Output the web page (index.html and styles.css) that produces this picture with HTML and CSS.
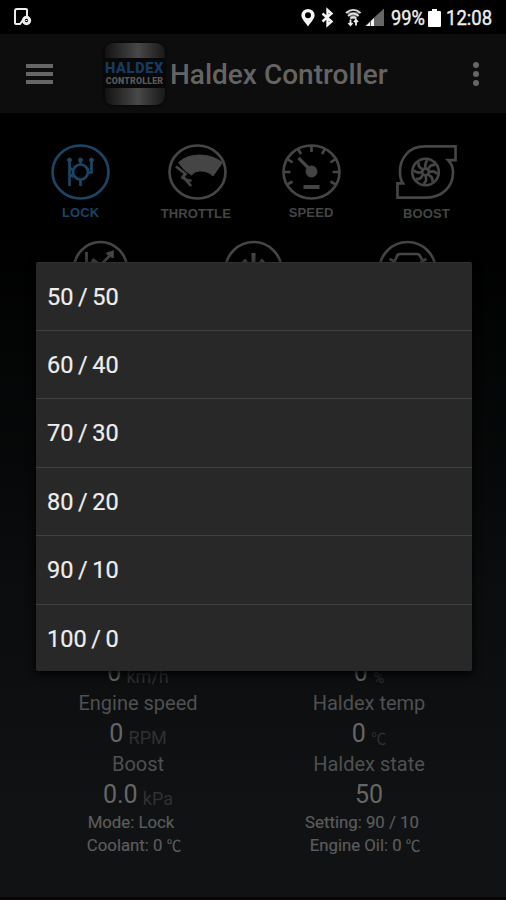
FILE: index.html
```html
<!DOCTYPE html>
<html lang="en">
<head>
<meta charset="utf-8">
<title>Haldex Controller</title>
<link rel="stylesheet" href="styles.css">
</head>
<body>
<div class="status">
  <svg class="note" width="20" height="22" viewBox="0 0 20 22" fill="none" stroke="#eee" stroke-width="2"><path d="M14 9V3Q14 2 13 2H4Q2 2 2 4V16Q2 17 3 17H7L10 13"/><circle cx="13.500" cy="13.500" r="3.200" stroke-width="3"/><path d="M12.500 13.500h2" stroke-width="1"/></svg>
  <svg class="tray" width="88" height="22" viewBox="0 0 88 22">
    <path fill="#f4f4f4" fill-rule="evenodd" d="M7 2a6.600 6.300 0 0 1 6.600 6.300C13.600 12 9.500 15.500 7 19.500C4.500 15.500.4 12 .4 8.300A6.600 6.300 0 0 1 7 2zM7 5.200a3 3 0 1 0 0 6a3 3 0 1 0 0-6z"/>
    <path fill="none" stroke="#f4f4f4" stroke-width="2.400" d="M21.500 6.500L30.500 14.500L26.500 18V3L30.500 6.500L21.500 14.500"/>
    <g transform="translate(1 0)">
    <path fill="none" stroke="#ddd" stroke-width="1.800" d="M44 6Q51.300-.2 58.600 6M46 9Q51.300 4 56.600 9M48.200 11.500Q51.300 9 54.400 11.500"/>
    <path fill="#eee" d="M44.500 5.200h13.500l-5.500 7h-2.500z" opacity=".45"/>
    <path stroke="#eee" stroke-width="1.800" fill="none" d="M48.500 12.500v5.500M46.500 16l2 2.200l2-2.200M54 18.500V13M52 15l2-2.200l2 2.200"/>
    </g>
    <path fill="#666" d="M83 1.500V19H64z"/><path fill="#f4f4f4" d="M65 19L69 15.300V19zM70 14L73 11V19h-3z"/>
  </svg>
  <span class="pct">99%</span>
  <svg class="batt" width="13" height="20" viewBox="0 0 13 20"><path fill="#fff" d="M4 1h5v2h3q1 0 1 1v14q0 1-1 1H1q-1 0-1-1V4q0-1 1-1h3z"/></svg>
  <span class="clock">12:08</span>
</div>
<header class="bar">
  <div class="menu"><i></i><i></i><i></i></div>
  <div class="logo"><span class="cap"></span><span class="name">HALDEX</span><span class="sub">CONTROLLER</span><span class="cap low"></span></div>
  <h1>Haldex Controller</h1>
  <div class="more"><i></i><i></i><i></i></div>
</header>
<main>
  <div class="modes">
    <div class="mode on"><svg viewBox="0 0 60 58"><ellipse cx="30" cy="29" rx="28" ry="26.500"/><circle cx="30" cy="29" r="7.500"/><path d="M19 17V43M30 17v5M30 37v6M41 17v12.500h-4M19 25l4 2M19 31l4 3"/><g class="dots"><circle cx="19" cy="17" r="2"/><circle cx="30" cy="17" r="2"/><circle cx="41" cy="17" r="2"/></g></svg><b class="lock">LOCK</b></div>
    <div class="mode throttle"><svg viewBox="0 0 60 58"><ellipse cx="30" cy="29" rx="28" ry="26.500"/><path class="dots" d="M11 19.500Q19 12 32 12Q45 12 55 19.500L45.500 33Q40 27.500 32 28Q27 28 24 32L17 27z"/><path d="M8.500 23.500L18 31L15.500 33.500L23.500 43M14 34l6 3.500h4"/></svg><b>THROTTLE</b></div>
    <div class="mode speed"><svg viewBox="0 0 60 58"><ellipse cx="30" cy="29" rx="28" ry="26.500"/><path d="M30 3v6M16.500 6l3 5M43.500 6l-3 5M6 16l5 3.500M54 16l-5 3.500M2 29h7M58 29h-7M5 42l6-3.500M55 42l-6-3.500"/><path stroke-width="3" d="M17 15L30 28"/><circle class="dots" cx="30" cy="28.500" r="5.500"/><path d="M22 44h16" stroke-width="4"/></svg><b>SPEED</b></div>
    <div class="mode"><svg viewBox="0 0 62 58"><path d="M60.500 3H29C13 3 4 15 4 29Q4 36 7 40.500H1.500V55H31C47 55 58 44 58 29Q58 22 53 17H60.500z"/><circle cx="30" cy="29" r="13.500"/><circle cx="30" cy="29" r="3.500"/><path d="M30 25Q29 20 32 17M33 26Q35 21 40 22M34 29Q39 27 42 31M33 32Q38 34 37 39M30 33Q32 38 28 41M27 32Q25 37 20 36M26 29Q21 31 18 27M27 26Q22 24 23 19"/></svg><b>BOOST</b></div>
  </div>
  <div class="modes second">
    <div class="mode"><svg viewBox="0 0 60 58"><ellipse cx="30" cy="29" rx="26.500" ry="27"/><path d="M16 12V43H45M18 28L23 20L30 25L41 14M36 14l6-2v6"/></svg></div>
    <div class="mode"><svg viewBox="0 0 60 58"><circle cx="30" cy="30" r="28"/><path d="M30 13v17M23 20A12 12 0 1 0 37 20" stroke-width="4"/></svg></div>
    <div class="mode"><svg viewBox="0 0 60 58"><circle cx="30" cy="30" r="28"/><path d="M16 24L20 15Q21 14 23 14H39Q41 14 42 15L47 24V39H14V24zM12 19l6 3M49 19l-6 3"/></svg></div>
  </div>
  <div class="stats">
    <section><p class="value">0 <small>km/h</small></p><p class="label">Engine speed</p><p class="value">0 <small>RPM</small></p><p class="label">Boost</p><p class="value">0.0 <small>kPa</small></p><p class="info">Mode: Lock</p><p class="info wide">Coolant: 0 <span>℃</span></p></section>
    <section><p class="value">0 <small class="deg">%</small></p><p class="label">Haldex temp</p><p class="value">0 <small class="deg">℃</small></p><p class="label">Haldex state</p><p class="value">50</p><p class="info">Setting: 90 / 10</p><p class="info wide">Engine Oil: 0 <span>℃</span></p></section>
  </div>
</main>
<ul class="dialog"><li>50 / 50</li><li>60 / 40</li><li>70 / 30</li><li>80 / 20</li><li>90 / 10</li><li>100 / 0</li></ul>
</body>
</html>
```
FILE: styles.css
```css
* { box-sizing: border-box; margin: 0; padding: 0; }
body { width: 506px; height: 900px; overflow: hidden; display: flex; flex-direction: column; position: relative; background: #000; font-family: Roboto, "Noto Sans CJK JP", sans-serif; }
.status { flex: none; height: 34px; display: flex; align-items: center; color: #eee; padding: 2px 13px 0 13px; font-size: 21px; }
.tray { margin-left: auto; margin-right: 3px; }
.pct, .clock { transform-origin: left; white-space: nowrap; -webkit-text-stroke: .4px #eee; }
.pct { width: 37px; transform: scaleX(.87); margin-left: -1px; }
.clock { width: 47px; transform: scaleX(.88); margin-left: 5px; }
.batt { flex: none; }
.bar { flex: none; height: 79px; background: #0d0d0d; display: flex; align-items: center; padding: 0 26px; }
.menu { width: 27px; height: 20px; display: flex; flex-direction: column; justify-content: space-between; }
.menu i { height: 4px; background: #666; }
.logo { width: 61px; height: 62px; margin-left: 51px; border-radius: 9px; background: #080808; overflow: hidden; display: flex; flex-direction: column; align-items: center; box-shadow: 0 0 3px #000; }
.cap { flex: none; width: 60px; height: 15px; background: linear-gradient(90deg, #121212, #484848 55%, #181818); }
.name { height: 15px; margin-top: 2px; font: 900 14.500px/17px Roboto, sans-serif; letter-spacing: .7px; color: #173b5e; }
.sub { height: 13px; font: 900 8.800px/13px Roboto, sans-serif; letter-spacing: .2px; color: #595959; }
.low { height: 17px; }
.bar h1 { margin-left: 5px; padding-top: 1px; font-size: 28px; font-weight: 500; color: #646464; white-space: nowrap; }
.more { margin-left: auto; width: 9px; height: 24px; display: flex; flex-direction: column; justify-content: space-between; align-items: center; }
.more i { width: 6px; height: 6px; border-radius: 50%; background: #666; }
main { flex: 1; min-height: 0; display: flex; flex-direction: column; background: linear-gradient(#000 0, #000 14%, #0a0c0d 60%, #101214 90%, #111214 99.6%, #0b0306 99.6%); }
.modes { flex: none; height: 126px; padding: 30px 22px 0 23px; display: grid; grid-template-columns: repeat(4, 1fr); }
.mode { display: flex; flex-direction: column; align-items: center; color: #454545; }
.mode svg { flex: none; width: 61px; height: 58px; fill: none; stroke: currentColor; stroke-width: 2.700px; }
.mode svg path[stroke-width="3"] { stroke-width: 3.200px; }
.mode svg path[stroke-width="4"] { stroke-width: 4px; }
.mode .dots { fill: currentColor; stroke-width: 1px; }
.mode.on { color: #1a4565; }
.mode b { font: bold 13px/24px "Liberation Sans", sans-serif; white-space: nowrap; margin-top: 1px; letter-spacing: .1px; }
.mode .lock, .speed b { margin-top: 0; }
.throttle svg { margin-left: 4px; }
.speed svg { margin-left: 1px; }
.second { grid-template-columns: repeat(3, 1fr); padding: 1px 22px 0 24px; height: 420px; }
.stats { flex: none; display: flex; padding: 0 22px; }
.stats section { width: 231px; display: flex; flex-direction: column; align-items: center; color: #505050; }
.stats section p { white-space: nowrap; }
.value { height: 32px; font-size: 25px; line-height: 32px; color: #666; margin-top: -2px; padding-left: 1px; }
.value small { font-size: 18px; color: #303132; margin-left: -1px; position: relative; top: 2px; }
.value .deg { font-size: 15px; line-height: 1; }
.label { height: 31px; line-height: 28px; font-size: 20px; padding-left: 1px; }
.info { height: 23px; font-size: 16.800px; line-height: 22px; color: #5c5c5c; margin-left: -13px; -webkit-text-stroke: .2px #5c5c5c; }
.info span { font-size: 14.500px; }
.wide { margin-left: -7px; }
.dialog { position: absolute; left: 36px; top: 262px; width: 436px; height: 409px; background: #282828; border-radius: 2px; box-shadow: 0 3px 10px #000; list-style: none; display: grid; grid-template-rows: 67.500px repeat(4, 68.500px) 1fr; border-top: 1px solid #303030; }
.dialog li { display: flex; align-items: center; padding: 1px 0 0 11px; font-size: 23.500px; word-spacing: -1.300px; color: #eee; -webkit-text-stroke: .2px #eee; border-bottom: 1px solid #404040; }
.dialog li:last-child { border: 0; padding-top: 3px; }
```
